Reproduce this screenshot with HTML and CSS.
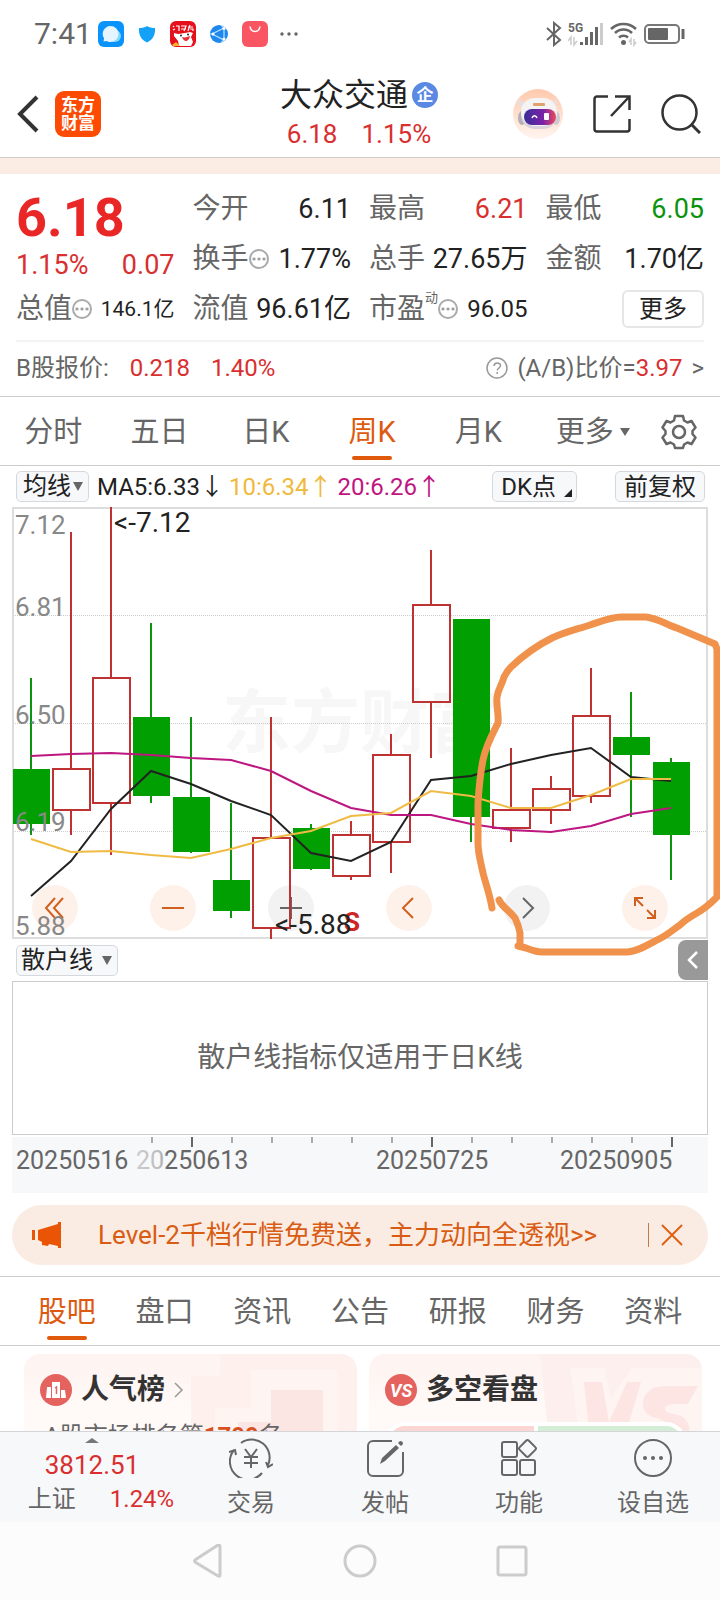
FILE: index.html
```html
<!DOCTYPE html>
<html lang="zh-CN">
<head>
    <meta charset="UTF-8">
    <meta name="viewport" content="width=device-width, initial-scale=1.0">
    <title>大众交通 6.18 1.15%</title>
    <link rel="stylesheet" href="styles.css">
</head>
<body>
    <div class="statusbar">
        <span class="clock">7:41</span>
        <div class="notifications">
            <svg width="26" height="26" viewBox="0 0 26 26"><rect width="26" height="26" rx="6" fill="#0a94fb"/><circle cx="17" cy="15" r="6" fill="#7fd6ff"/><path d="M12.500 5a8 8 0 0 1 0 16c-2 0-3-.6-4-1l-3 .5.600-3A8 8 0 0 1 12.500 5z" fill="#e4f5ff"/></svg>
            <svg width="18" height="18" viewBox="0 0 18 18"><path d="M9 1c2 1.500 5 2 8 2 .5 7-2 11.500-8 14.500C3 14.500.5 10 1 3c3 0 6-.5 8-2z" fill="#13a2f8"/></svg>
            <svg width="26" height="26" viewBox="0 0 26 26"><rect width="26" height="26" rx="6" fill="#e60f1c"/><path d="M3 5l1 1M3 9l2-1M6 5h3v5M11 5h5l-2 5M11 8h5M18 6h5M20 4l-2 6M20 8h3v2" fill="none" stroke="#fff" stroke-width="1.200"/><path d="M4 12l4 1 7-1 5-1 3 1-2 4 2 5-2 4H9l-1-5-4-5z" fill="#fff"/><path d="M12 16c3 1 5 0 8-1-1 6-6 7-8 1z" fill="#e3323a"/><circle cx="11" cy="14.500" r="1" fill="#222"/><circle cx="18" cy="13.500" r="1" fill="#222"/><path d="M2 24l4-3 4 4H3z" fill="#ffb12a"/></svg>
            <svg width="18" height="18" viewBox="0 0 18 18"><circle cx="9" cy="9" r="9" fill="#1e88ee"/><path d="M2 9L14 3v12zM14 3L11 0M14 15l-3 3M2 9H0" fill="none" stroke="#b9e2ff" stroke-width="1.200"/><circle cx="14" cy="3.500" r="1.500" fill="#fff"/><circle cx="14" cy="14" r="1.500" fill="#fff"/><circle cx="3" cy="9" r="1.500" fill="#fff"/></svg>
            <svg width="26" height="26" viewBox="0 0 26 26"><rect width="26" height="26" rx="6" fill="#fa5563"/><path d="M8 5.500c1 6.500 9 6.500 10 0" fill="none" stroke="#fff" stroke-width="1.500"/></svg>
            <svg width="18" height="26" viewBox="0 0 18 26"><g fill="#666"><circle cx="2" cy="13" r="1.700"/><circle cx="9" cy="13" r="1.700"/><circle cx="16" cy="13" r="1.700"/></g></svg>
        </div>
        <div class="signals">
            <svg width="16" height="26" viewBox="0 0 16 26"><path d="M1 7l13 12-6 5V2l6 5L1 19" fill="none" stroke="#666" stroke-width="2"/></svg>
            <svg width="36" height="26" viewBox="0 0 36 26"><text class="net" x="0" y="11">5G</text><path d="M3 24v-8l-3 4M6 16v8l3-4" fill="none" stroke="#ccc" stroke-width="1.500"/><g fill="#666"><rect x="12" y="21" width="3" height="3"/><rect x="17" y="16" width="3" height="8"/><rect x="22" y="11" width="3" height="13"/><rect x="27" y="6" width="3" height="18"/></g><rect x="32" y="2" width="3" height="22" fill="#ccc"/></svg>
            <svg width="28" height="26" viewBox="0 0 28 26"><g fill="none" stroke="#666" stroke-width="2.600"><path d="M1 8a18 18 0 0 1 25 0"/><path d="M5 12a12 12 0 0 1 17 0"/><path d="M9 16.500a6.500 6.500 0 0 1 9 0"/></g><circle cx="13.500" cy="21.500" r="2.500" fill="#666"/><path d="M21 24v-6l-2 3M24 18v6l2-3" fill="none" stroke="#ccc" stroke-width="1.500"/></svg>
            <svg width="42" height="26" viewBox="0 0 42 26"><rect x="1" y="4" width="34" height="18" rx="4" fill="none" stroke="#777" stroke-width="2"/><rect x="4" y="7" width="20" height="12" rx="1" fill="#666"/><path d="M39 8v10" stroke="#666" stroke-width="3"/></svg>
        </div>
    </div>

    <header class="header">
        <div class="header-left">
            <button class="icon-btn" aria-label="返回"><svg width="22" height="38" viewBox="0 0 22 38"><path d="M20 2L3 19l17 17" fill="none" stroke="#333" stroke-width="4"/></svg></button>
            <a class="logo" href="#">东方<br>财富</a>
        </div>
        <div class="stock">
            <h1>大众交通<span class="badge">企</span></h1>
            <p class="up"><span>6.18</span><span>1.15%</span></p>
        </div>
        <div class="header-right">
            <button class="icon-btn" aria-label="智能助手">
                <svg width="50" height="50" viewBox="0 0 50 50">
                    <defs>
                        <linearGradient id="halo" x1="0" y1="0" x2="0" y2="1"><stop offset="0" stop-color="#ffc9ad"/><stop offset="1" stop-color="#fff5ef"/></linearGradient>
                        <linearGradient id="visor"><stop offset="0" stop-color="#3a2f96"/><stop offset=".6" stop-color="#7a22a8"/><stop offset="1" stop-color="#ec4a5d"/></linearGradient>
                    </defs>
                    <circle cx="25" cy="25" r="25" fill="url(#halo)"/>
                    <path d="M5 9c1 3 3 4 6 4l-2 5c-4-1-5-5-4-9zM43 9c-1 3-3 4-6 4l2 5c4-1 5-5 4-9z" fill="#e5e0e3"/>
                    <ellipse cx="9" cy="29" rx="4" ry="7" fill="#b5b0b6"/><ellipse cx="43" cy="29" rx="4" ry="7" fill="#cfcacf"/>
                    <rect x="8" y="10" width="36" height="30" rx="14" fill="#d9d4da"/>
                    <rect x="8" y="9" width="36" height="28" rx="14" fill="#f6f3f5"/>
                    <rect x="20" y="14" width="12" height="3" rx="1" fill="#e0a26c"/>
                    <rect x="11" y="20" width="32" height="16" rx="8" fill="url(#visor)"/>
                    <path d="M19 29c1-3 4-3 5 0" fill="none" stroke="#fff" stroke-width="1.500"/><rect x="31" y="24" width="5" height="7" rx="1" fill="#fff"/>
                </svg>
            </button>
            <button class="icon-btn" aria-label="分享"><svg width="38" height="38" viewBox="0 0 38 38"><path d="M15 1.500H4A2.500 2.500 0 0 0 1.500 4v30A2.500 2.500 0 0 0 4 36.500h30a2.500 2.500 0 0 0 2.500-2.500V24M18 21L36 2M22 1.500h14.500V15" fill="none" stroke="#333" stroke-width="2.500"/></svg></button>
            <button class="icon-btn" aria-label="搜索"><svg width="40" height="40" viewBox="0 0 40 40"><circle cx="18.500" cy="18.500" r="17" fill="none" stroke="#333" stroke-width="2.500"/><path d="M30 30l9 9" stroke="#333" stroke-width="3"/></svg></button>
        </div>
    </header>

    <main class="main">
        <div class="strip"></div>

        <section class="quote">
            <div class="quote-grid">
                <div class="price up">
                    <strong>6.18</strong>
                    <div><span>1.15%</span><span>0.07</span></div>
                </div>
                <div class="cell"><span>今开</span><b>6.11</b></div>
                <div class="cell"><span>最高</span><b class="up">6.21</b></div>
                <div class="cell"><span>最低</span><b class="down">6.05</b></div>
                <div class="cell"><span>换手<i class="more-dot"></i></span><b>1.77%</b></div>
                <div class="cell"><span>总手</span><b>27.65万</b></div>
                <div class="cell"><span>金额</span><b>1.70亿</b></div>
                <div class="cell"><span>总值<i class="more-dot"></i></span><b class="small">146.1亿</b></div>
                <div class="cell"><span>流值</span><b>96.61亿</b></div>
                <div class="cell"><span>市盈<sup>动</sup><i class="more-dot"></i></span><b class="mid">96.05</b></div>
                <div class="cell cell-end"><button class="more-btn">更多</button></div>
            </div>
            <div class="b-share">
                <div class="b-left"><span>B股报价:</span><span class="up">0.218</span><span class="up">1.40%</span></div>
                <a class="ratio" href="#">
                    <svg width="22" height="22" viewBox="0 0 22 22"><circle cx="11" cy="11" r="10" fill="none" stroke="#999" stroke-width="1.500"/><path d="M8 9c0-4 6.500-4 6.500-.5 0 2.500-3.200 2.500-3.200 5" fill="none" stroke="#999" stroke-width="1.500"/><circle cx="11.200" cy="16" r="1" fill="#999"/></svg>
                    <span>(A/B)比价=<em class="up">3.97</em></span><span>&gt;</span>
                </a>
            </div>
        </section>

        <nav class="periods">
            <a href="#">分时</a>
            <a href="#">五日</a>
            <a href="#">日K</a>
            <a href="#" class="active">周K</a>
            <a href="#">月K</a>
            <a href="#">更多<i class="caret"></i></a>
            <button class="icon-btn" aria-label="设置"><svg width="36" height="36" viewBox="0 0 36 36"><path d="M14 2h8l1 4.500 3.500 2 4-1.500 4 6.500-3 3.500v3l3 3.500-4 6.500-4-1.500-3.500 2L22 34h-8l-1-3.500-3.500-2-4 1.500-4-6.500 3-3.500v-3l-3-3.500 4-6.500 4 1.500 3.500-2z" fill="none" stroke="#666" stroke-width="2.500" stroke-linejoin="round"/><circle cx="18" cy="18" r="6" fill="none" stroke="#666" stroke-width="2.500"/></svg></button>
        </nav>

        <div class="indicators">
            <span class="dropdown"><select aria-label="主图指标"><option>均线</option></select></span>
            <div class="ma"><span>MA5:6.33↓</span><span class="ma10">10:6.34↑</span><span class="ma20">20:6.26↑</span></div>
            <button class="chip corner">DK点</button>
            <button class="chip">前复权</button>
        </div>

        <section class="chart">
            <svg class="kline" viewBox="0 0 720 432" role="img" aria-label="周K线图">
                <text class="watermark" x="222" y="240">东方财富</text>
                <rect x="13" y="1" width="694" height="430" fill="none" stroke="#ddd" stroke-width="2"/>
                <path class="grid" d="M13 108.500H707M13 216.500H707M13 324.500H707"/>
                <g class="wick fall">
                    <path d="M31 171V328M151 116V296M191 210V346M231 296V411M311 317V363M471 112V335M631 185V310M671 251V373"/>
                </g>
                <g class="fall-body">
                    <rect x="13" y="262" width="37" height="55"/>
                    <rect x="133" y="210" width="37" height="79"/>
                    <rect x="173" y="290" width="37" height="55"/>
                    <rect x="213" y="373" width="37" height="31"/>
                    <rect x="293" y="321" width="37" height="41"/>
                    <rect x="453" y="112" width="37" height="198"/>
                    <rect x="613" y="230" width="37" height="18"/>
                    <rect x="653" y="255" width="37" height="73"/>
                </g>
                <g class="wick rise">
                    <path d="M71 25V261M71 304V328M111 0V170M111 297V348M271 210V330M271 422V432M351 314V327M351 370V373M391 227V247M391 336V366M431 43V97M431 196V251M511 241V302M511 321V335M551 269V281M551 304V317M591 161V208M591 290V296"/>
                    <rect x="53" y="262" width="37" height="41"/>
                    <rect x="93" y="171" width="37" height="125"/>
                    <rect x="253" y="331" width="37" height="90"/>
                    <rect x="333" y="328" width="37" height="41"/>
                    <rect x="373" y="248" width="37" height="87"/>
                    <rect x="413" y="98" width="37" height="97"/>
                    <rect x="493" y="303" width="37" height="18"/>
                    <rect x="533" y="282" width="37" height="21"/>
                    <rect x="573" y="209" width="37" height="80"/>
                </g>
                <polyline class="line line5" points="31,389 71,354 111,302 151,264 191,277 231,294 271,308 311,346 351,354 391,335 431,273 471,269 511,257 551,248 591,241 631,270 671,274"/>
                <polyline class="line line20" points="31,249 71,247 111,246 151,248 191,251 231,253 271,264 311,284 351,301 391,308 431,308 471,317 511,323 551,325 591,319 631,307 671,301"/>
                <polyline class="line line10" points="31,332 71,345 111,344 151,348 191,351 231,342 271,331 311,324 351,309 391,306 431,284 471,289 511,301 551,301 591,288 631,272 671,272"/>
                <g class="scale">
                    <text x="15" y="27">7.12</text>
                    <text x="15" y="109">6.81</text>
                    <text x="15" y="217">6.50</text>
                    <text x="15" y="324">6.19</text>
                    <text x="15" y="428">5.88</text>
                </g>
                <text class="sell" x="344" y="424">S</text>
                <text class="mark" x="114" y="25">&lt;-7.12</text>
                <text class="mark" x="275" y="427">&lt;-5.88</text>
            </svg>
            <div class="controls">
                <button aria-label="最左"><svg width="22" height="22" viewBox="0 0 22 22"><path d="M11 1L2 11l9 10M19 1l-9 10 9 10"/></svg></button>
                <button aria-label="缩小"><svg width="22" height="22" viewBox="0 0 22 22"><path d="M0 11h22"/></svg></button>
                <button class="off" aria-label="放大"><svg width="22" height="22" viewBox="0 0 22 22"><path d="M0 11h22M11 0v22"/></svg></button>
                <button aria-label="左移"><svg width="22" height="22" viewBox="0 0 22 22"><path d="M15 1L5 11l10 10"/></svg></button>
                <button class="off" aria-label="右移"><svg width="22" height="22" viewBox="0 0 22 22"><path d="M7 1l10 10L7 21"/></svg></button>
                <button aria-label="全屏"><svg width="22" height="22" viewBox="0 0 22 22"><path d="M9 1H1v8M1 1l8 8M13 21h8v-8M21 21l-8-8"/></svg></button>
            </div>
            <svg class="doodle" viewBox="0 0 720 460"><path d="M492 401C490 388 486 378 483 366C480 352 478 346 478 336V296C479 280 480 268 483 253C486 238 493 226 498 216C499 206 496 200 497 190C498 182 502 178 504 170C506 166 508 163 511 160Q530 142 552 131C565 125 578 122 590 118C602 114 612 110 621 110H646C656 111 666 117 677 121L715 137L717 142V390C710 397 704 402 697 406C690 410 684 414 680 418C674 422 665 430 657 433C646 439 636 445 627 445H542C536 445 531 443 526 441L518 439L520 437V426C519 420 517 415 515 411C510 404 502 400 499 393"/></svg>
        </section>

        <div class="sub-head">
            <span class="dropdown wide"><select aria-label="副图指标"><option>散户线</option></select></span>
            <button class="drawer" aria-label="展开"><svg width="12" height="18" viewBox="0 0 12 18"><path d="M10 1L2 9l8 8" fill="none" stroke="#fff" stroke-width="2.500"/></svg></button>
        </div>
        <div class="sub-chart">散户线指标仅适用于日K线</div>
        <svg class="dates" viewBox="0 0 696 56">
            <defs><linearGradient id="fade" x1="0" x2="1"><stop offset="0" stop-color="#ccc"/><stop offset=".22" stop-color="#bbb"/><stop offset=".28" stop-color="#666"/></linearGradient></defs>
            <path d="M140 0v6M220 0v6M260 0v6M300 0v6M340 0v6M380 0v6M460 0v6M500 0v6M540 0v6M580 0v6M620 0v6" stroke="#aaa" stroke-width="2"/>
            <path d="M180 0v10M420 0v10M660 0v10" stroke="#666" stroke-width="2"/>
            <text x="4" y="32">20250516</text>
            <text class="faded" x="124" y="32">20250613</text>
            <text x="364" y="32">20250725</text>
            <text x="548" y="32">20250905</text>
        </svg>

        <div class="banner">
            <svg width="32" height="26" viewBox="0 0 32 26"><path d="M1 8h3v10H1zM7 8l20-6V0h3v26h-3v-2l-9-2-1 2-6-1v-3l-4-2z" fill="#e95504"/></svg>
            <a href="#">Level-2千档行情免费送，主力动向全透视&gt;&gt;</a>
            <button class="icon-btn" aria-label="关闭"><svg width="22" height="22" viewBox="0 0 22 22"><path d="M1 1l20 20M21 1L1 21" stroke="#dd6216" stroke-width="2"/></svg></button>
        </div>

        <nav class="sections">
            <a href="#" class="active">股吧</a>
            <a href="#">盘口</a>
            <a href="#">资讯</a>
            <a href="#">公告</a>
            <a href="#">研报</a>
            <a href="#">财务</a>
            <a href="#">资料</a>
        </nav>

        <div class="cards">
            <article class="card">
                <svg class="card-art" width="166" height="96" viewBox="0 0 166 96"><path d="M30 0H166V96H0V22H28z" fill="#fdf0ed"/><path d="M60 16h87v80H24V54h36z" fill="#fef5f3"/><path d="M80 36h52v60H47V68h33z" fill="#fce6e4"/></svg>
                <h2>
                    <svg width="32" height="32" viewBox="0 0 32 32"><circle cx="16" cy="16" r="16" fill="#e4635e"/><path d="M7 13h4v11H6zM12 8h8v16h-8zM21 16h4l1 8h-5z" fill="#fff"/><path d="M15 14l1.500-1v7" fill="none" stroke="#e4635e" stroke-width="1.500"/></svg>
                    人气榜
                    <svg width="10" height="16" viewBox="0 0 10 16"><path d="M1 1l7 7-7 7" fill="none" stroke="#999" stroke-width="1.500"/></svg>
                </h2>
                <p>A股市场排名第<b>1799</b>名</p>
            </article>
            <article class="card">
                <svg class="card-art" width="162" height="96" viewBox="0 0 162 96"><path d="M0 0H162V96H10z" fill="#fdefed"/><path d="M30 14h34l7 30 21-30h70v82H42z" fill="#fef5f3"/><path d="M44 28h18l7 40 18-40h14L81 96H51zM158 32h-34c-24 0-29 28-8 32 16 4 10 12-2 12h-14l-6 20h38c24-6 22-34 2-36-14-2-10-10 0-10h14z" fill="#fce5e3"/></svg>
                <h2>
                    <svg width="32" height="32" viewBox="0 0 32 32"><circle cx="16" cy="16" r="16" fill="#e4635e"/><text class="vs" x="5" y="23">VS</text></svg>
                    多空看盘
                </h2>
                <div class="versus"><span></span><span></span></div>
            </article>
        </div>
    </main>

    <footer class="toolbar">
        <a class="index" href="#">
            <i></i>
            <span class="up">3812.51</span>
            <div><span>上证</span><span class="up">1.24%</span></div>
        </a>
        <a class="tool" href="#">
            <svg width="44" height="40" viewBox="0 0 44 40"><g fill="none" stroke="#666" stroke-width="2"><path d="M12 5A18 18 0 0 1 39 27M33 35A18 18 0 0 1 5 12M0 14l6-2 1 5M44 26l-5 3-2-5"/><path d="M16 11l6 8 6-8M22 19v11M15 19h14M15 25h14"/></g></svg>
            交易
        </a>
        <a class="tool" href="#">
            <svg width="40" height="40" viewBox="0 0 40 40"><path d="M27 3H8a5 5 0 0 0-5 5v25a5 5 0 0 0 5 5h25a5 5 0 0 0 5-5V14" fill="none" stroke="#666" stroke-width="2"/><path d="M15 26l2-6L31 7l3 3-14 13zM33 5l2-2q3 0 3 3l-2 2z" fill="#666"/></svg>
            发帖
        </a>
        <a class="tool" href="#">
            <svg width="40" height="40" viewBox="0 0 40 40"><g fill="none" stroke="#666" stroke-width="2"><rect x="3" y="4" width="15" height="15" rx="2"/><rect x="3" y="22" width="15" height="15" rx="2"/><rect x="21" y="22" width="15" height="15" rx="2"/><rect x="22" y="4" width="13" height="13" rx="2" transform="rotate(45 28.500 10.500)"/></g></svg>
            功能
        </a>
        <a class="tool" href="#">
            <svg width="40" height="40" viewBox="0 0 40 40"><circle cx="20" cy="20" r="18" fill="none" stroke="#666" stroke-width="2"/><g fill="#666"><circle cx="12" cy="20" r="2"/><circle cx="20" cy="20" r="2"/><circle cx="28" cy="20" r="2"/></g></svg>
            设自选
        </a>
    </footer>
    <div class="sysnav">
        <button class="icon-btn" aria-label="返回"><svg width="34" height="34" viewBox="0 0 34 34"><path d="M29 3v28q0 2-2 1L4 18q-1-1 0-2L27 1q2-1 2 2z"/></svg></button>
        <button class="icon-btn" aria-label="主屏幕"><svg width="34" height="34" viewBox="0 0 34 34"><circle cx="17" cy="17" r="15"/></svg></button>
        <button class="icon-btn" aria-label="最近任务"><svg width="34" height="34" viewBox="0 0 34 34"><rect x="3" y="3" width="28" height="28" rx="2"/></svg></button>
    </div>
</body>
</html>
```
FILE: styles.css
```css
* {
    box-sizing: border-box;
}
body {
    margin: 0;
    height: 100vh;
    display: flex;
    flex-direction: column;
    overflow: hidden;
    background: #fff;
    color: #666;
    font-family: Roboto, 'Noto Sans CJK SC', sans-serif;
    font-size: 24px;
    line-height: 1;
}
h1, h2, p {
    margin: 0;
}
a {
    color: inherit;
    text-decoration: none;
}
button, select {
    font: inherit;
    color: inherit;
    border: 0;
    padding: 0;
    background: none;
}
svg {
    display: block;
    flex: none;
}
.icon-btn {
    display: flex;
    align-items: center;
    justify-content: center;
}
.up {
    color: #d92f2f;
}
.down {
    color: #0b930b;
}

/* status bar */
.statusbar {
    display: flex;
    align-items: center;
    height: 68px;
    padding: 0 34px;
    flex: none;
}
.clock {
    width: 64px;
    font-size: 30px;
}
.notifications {
    display: flex;
    align-items: center;
    gap: 14px;
}
.notifications svg:last-child {
    margin-left: -2px;
}
.signals {
    display: flex;
    align-items: center;
    gap: 6px;
    margin-left: auto;
}
.net {
    font-size: 12px;
    font-weight: 700;
    fill: #666;
}

/* header */
.header {
    display: grid;
    grid-template-columns: 1fr auto 1fr;
    align-items: center;
    height: 90px;
    padding: 2px 19px 0 17px;
    border-bottom: 1px solid #ccc;
    flex: none;
}
.header-left, .header-right {
    display: flex;
    align-items: center;
    gap: 16px;
}
.header-right {
    justify-content: flex-end;
    gap: 30px;
}
.logo {
    padding: 5px 6px;
    border-radius: 9px;
    background: #fd4b03;
    color: #fff;
    font-size: 17px;
    line-height: 18px;
    font-weight: 700;
}
.stock h1 {
    display: flex;
    align-items: center;
    gap: 4px;
    color: #222;
    font-size: 32px;
    line-height: 40px;
    font-weight: 400;
}
.badge {
    width: 26px;
    border-radius: 50%;
    background: #5a88e2;
    color: #fff;
    font-size: 17px;
    line-height: 26px;
    text-align: center;
    font-weight: 700;
}
.stock p {
    display: flex;
    justify-content: center;
    gap: 24px;
    font-size: 26px;
    line-height: 38px;
}

/* main */
.main {
    flex: 1;
    min-height: 0;
    overflow: hidden;
}
.strip {
    height: 16px;
    background: #fbede4;
}

/* quote panel */
.quote {
    padding: 10px 16px 0;
    border-bottom: 1px solid #ccc;
}
.quote-grid {
    display: grid;
    grid-template-columns: repeat(4, 1fr);
    grid-auto-rows: 50px;
    column-gap: 18px;
    padding-bottom: 6px;
    border-bottom: 2px solid #f3f3f3;
}
.price {
    grid-row: span 2;
}
.price strong {
    display: block;
    color: #ea2727;
    font-size: 54px;
    line-height: 68px;
    font-weight: 700;
}
.price div, .cell {
    display: flex;
    align-items: center;
    justify-content: space-between;
    font-size: 27px;
    white-space: nowrap;
}
.cell span {
    display: flex;
    align-items: center;
    font-size: 28px;
}
.cell b {
    font-weight: 400;
}
.cell b:not(.up):not(.down) {
    color: #222;
}
.cell .small {
    font-size: 21px;
}
.cell .mid {
    font-size: 24px;
}
.cell sup {
    align-self: flex-start;
    margin-top: -4px;
    font-size: 13px;
}
.more-dot {
    width: 20px;
    height: 20px;
    border: 2px solid #aaa;
    border-radius: 50%;
    background: radial-gradient(circle, #999 1px, transparent 2px) center / 5px 16px repeat-x;
}
.cell-end {
    justify-content: flex-end;
}
.more-btn {
    height: 38px;
    padding: 0 15px;
    border: 2px solid #e6e6e6;
    border-radius: 6px;
    color: #222;
}
.more-btn, .b-share {
    font-size: 24px;
}
.b-share, .b-left, .ratio {
    display: flex;
    align-items: center;
    justify-content: space-between;
}
.b-share {
    height: 54px;
    padding-bottom: 2px;
}
.b-left {
    gap: 21px;
}
.ratio {
    gap: 9px;
}
.ratio em {
    font-style: normal;
}

/* period tabs */
.periods {
    display: grid;
    grid-template-columns: repeat(5, 106fr) 122fr 50fr;
    height: 69px;
    padding: 2px 16px 0 0;
    border-bottom: 1px solid #ccc;
    font-size: 29px;
}
.periods a, .sections a {
    position: relative;
    display: flex;
    align-items: center;
    justify-content: center;
}
.active {
    color: #dd5a10;
}
.active::after {
    content: "";
    position: absolute;
    bottom: 5px;
    left: calc(50% - 20px);
    width: 40px;
    height: 4px;
    border-radius: 2px;
    background: #e15a0b;
}
.caret {
    margin-left: 6px;
    border: 5px solid transparent;
    border-top: 8px solid #666;
    border-bottom: 0;
}

/* indicator row */
.indicators {
    display: flex;
    align-items: center;
    height: 41px;
    padding: 0 15px 0 16px;
    color: #222;
}
.dropdown, .chip {
    position: relative;
    height: 31px;
    padding: 0 8px;
    border: 1px solid #d5d8dc;
    border-radius: 5px;
    background: #f7f8fa;
    color: #222;
    white-space: nowrap;
}
.dropdown {
    display: flex;
    align-items: center;
    gap: 2px;
    padding: 0 5px 0 6px;
}
.dropdown::after {
    content: "";
    border: 5px solid transparent;
    border-top: 9px solid #666;
    border-bottom: 0;
}
.dropdown select {
    appearance: none;
    height: 29px;
    line-height: 29px;
}
.dropdown.wide {
    gap: 9px;
    padding: 0 5px 0 4px;
}
.ma {
    display: flex;
    gap: 5px;
    margin: 0 auto 0 8px;
    white-space: nowrap;
}
.ma10 {
    color: #f0b93c;
}
.ma20 {
    color: #c0157f;
}
.chip + .chip {
    margin-left: 38px;
}
.chip.corner {
    padding-right: 20px;
}
.corner::after {
    content: "";
    position: absolute;
    right: 4px;
    bottom: 4px;
    border-left: 8px solid transparent;
    border-bottom: 8px solid #222;
}

/* k-line chart */
.chart {
    position: relative;
}
.kline {
    position: relative;
    z-index: 1;
    width: 100%;
    font-size: 26px;
    pointer-events: none;
}
.watermark {
    font-size: 69px;
    font-weight: 700;
    fill: #f7f7f7;
}
.grid {
    stroke: #ccc;
    stroke-dasharray: 1 1;
}
.wick {
    fill: none;
    stroke-width: 2;
}
.fall {
    stroke: #0d960d;
}
.fall-body {
    fill: #029f02;
}
.rise {
    stroke: #be3232;
}
.line {
    fill: none;
    stroke-width: 2;
}
.line5 {
    stroke: #222;
}
.line10 {
    stroke: #f0bb45;
}
.line20 {
    stroke: #bd1680;
}
.scale {
    fill: #888;
}
.mark {
    fill: #222;
    font-size: 28px;
}
.sell {
    fill: #cf2525;
    font-weight: 700;
}
.controls {
    position: absolute;
    left: 32px;
    right: 52px;
    bottom: 8px;
    display: flex;
    justify-content: space-between;
}
.controls button {
    display: flex;
    align-items: center;
    justify-content: center;
    width: 46px;
    height: 46px;
    border-radius: 50%;
    background: #fef1ea;
    color: #d1601f;
}
.controls .off {
    background: #f2f2f2;
    color: #666;
}
.controls path {
    fill: none;
    stroke: currentColor;
    stroke-width: 2;
}
.doodle {
    position: absolute;
    top: 0;
    left: 0;
    z-index: 2;
    width: 100%;
    pointer-events: none;
}
.doodle path {
    fill: none;
    stroke: #f0924b;
    stroke-width: 7;
    stroke-linecap: round;
    stroke-linejoin: round;
}

/* sub chart */
.sub-head {
    display: flex;
    align-items: center;
    justify-content: space-between;
    height: 42px;
    padding: 0 12px 0 16px;
}
.drawer {
    display: flex;
    align-items: center;
    justify-content: center;
    width: 30px;
    height: 40px;
    border-radius: 8px 0 0 8px;
    background: #999;
}
.sub-chart {
    margin: 0 12px 2px;
    padding: 61px 0;
    border: 1px solid #ccc;
    font-size: 28px;
    line-height: 30px;
    text-align: center;
}
.dates {
    width: calc(100% - 24px);
    margin: 0 12px;
    background: #f7f8fa;
    fill: #666;
    font-size: 25px;
}
.faded {
    fill: url(#fade);
}

/* banner */
.banner {
    display: flex;
    align-items: center;
    height: 60px;
    margin: 12px 12px 11px;
    padding: 0 25px 0 19px;
    border-radius: 30px;
    background: #fbece3;
    color: #d95c14;
    font-size: 26px;
}
.banner a {
    margin: 0 auto 0 35px;
    white-space: nowrap;
}
.banner button {
    height: 24px;
    padding-left: 12px;
    border-left: 1px solid #c27a48;
}

/* section tabs */
.sections {
    display: grid;
    grid-template-columns: repeat(7, 1fr);
    height: 70px;
    padding: 2px 18px 0;
    border: 1px solid #ccc;
    border-width: 1px 0;
    font-size: 29px;
}

/* cards */
.cards {
    display: grid;
    grid-template-columns: 1fr 1fr;
    gap: 12px;
    padding: 8px 18px 8px 24px;
}
.card {
    position: relative;
    overflow: hidden;
    padding: 16px 16px 24px;
    border-radius: 16px;
    background: linear-gradient(#fef3f0, #fffaf8 60px);
}
.card-art {
    position: absolute;
    top: 0;
    right: 0;
}
.card h2 {
    position: relative;
    display: flex;
    align-items: center;
    gap: 9px;
    height: 40px;
    color: #333;
    font-size: 28px;
}
.card p {
    position: relative;
    padding: 14px 4px;
}
.card p b {
    color: #d9501e;
}
.vs {
    fill: #fff;
    font-size: 18px;
    font-style: italic;
    font-weight: 700;
}
.versus {
    position: relative;
    display: grid;
    grid-template-columns: 1fr 1fr;
    gap: 4px;
    height: 40px;
    margin-top: 12px;
    border: 4px solid #fff;
    border-radius: 24px;
    overflow: hidden;
    background: #fff;
}
.versus span {
    background: #fcd6d2;
}
.versus span + span {
    background: #d3edd6;
}

/* bottom toolbar */
.toolbar {
    display: grid;
    grid-template-columns: 184fr repeat(4, 134fr);
    flex: none;
    height: 91px;
    border-top: 1px solid #d3d5d8;
    background: #f6f8fa;
}
.index, .tool {
    display: flex;
    flex-direction: column;
    align-items: center;
}
.index i {
    margin-top: 6px;
    border: 7px solid transparent;
    border-bottom: 5px solid #777;
    border-top: 0;
}
.index > span {
    font-size: 26px;
    line-height: 44px;
}
.index div {
    display: flex;
    gap: 34px;
    margin-left: 18px;
}
.tool {
    gap: 13px;
    padding-top: 6px;
}

/* system navigation */
.sysnav {
    display: flex;
    align-items: center;
    justify-content: center;
    gap: 118px;
    flex: none;
    height: 78px;
    background: #fcfcfc;
}
.sysnav path, .sysnav circle, .sysnav rect {
    fill: none;
    stroke: #ccc;
    stroke-width: 3;
}
```
